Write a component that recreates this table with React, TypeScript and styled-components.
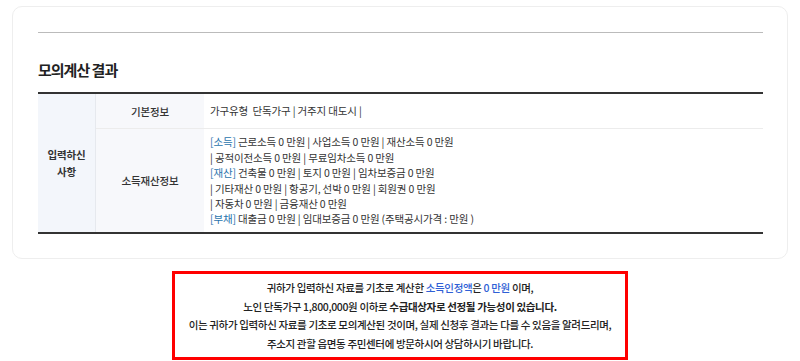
import styled, { createGlobalStyle } from "styled-components";

const GlobalStyle = createGlobalStyle`
  body {
    margin: 0;
    background: #ffffff;
    font-family: "Noto Sans CJK KR", "Noto Sans", sans-serif;
    color: #333;
  }
`;

const Page = styled.div`
  width: 800px;
  padding-top: 6px;
`;

const Card = styled.section`
  margin: 0 12px;
  height: 253px;
  box-sizing: border-box;
  border: 1px solid #eeeeee;
  border-radius: 10px;
  padding: 25px 24px 0 25px;
`;

const Divider = styled.hr`
  margin: 0;
  border: 0;
  border-top: 1px solid #bbbbbb;
`;

const Title = styled.h2`
  margin: 26px 0 0;
  height: 33px;
  font-size: 15px;
  font-weight: 700;
  letter-spacing: -1px;
  color: #222;
`;

const Table = styled.table`
  width: 100%;
  border-collapse: collapse;
  border-top: 2px solid #333;
  border-bottom: 2px solid #333;
  font-size: 10.5px;
  letter-spacing: -0.15px;
`;

const GroupHead = styled.th`
  width: 57px;
  padding: 0;
  background: #f3f6fb;
  border-right: 1px solid #e6e9ee;
  font-weight: 700;
  line-height: 17px;
  color: #333;
`;

const RowHead = styled.th<{ $h: number; $line?: boolean }>`
  width: 108px;
  height: ${(p) => p.$h}px;
  padding: 0;
  background: #f7f8fb;
  font-weight: 500;
  color: #333;
  border-bottom: ${(p) => (p.$line ? "1px solid #ececec" : "0")};
`;

const Cell = styled.td<{ $line?: boolean }>`
  padding: 0 6px;
  line-height: 15.4px;
  color: #333;
  border-bottom: ${(p) => (p.$line ? "1px solid #ececec" : "0")};
`;

const Tag = styled.span`
  color: #2a74ad;
`;

const Notice = styled.div`
  width: 456px;
  box-sizing: border-box;
  margin: 12px auto 0;
  border: 3px solid #ff0000;
  padding: 5px 0 4px;
  text-align: center;
  font-size: 10.5px;
  font-weight: 500;
  letter-spacing: -0.35px;
  line-height: 18.5px;
  color: #222;
`;

const Blue = styled.span`
  color: #2f5fd6;
`;

const Strong = styled.b`
  font-weight: 700;
`;

const incomeLines = [
  { tag: "[소득]", text: " 근로소득 0 만원 | 사업소득 0 만원 | 재산소득 0 만원" },
  { tag: "", text: "| 공적이전소득 0 만원 | 무료임차소득 0 만원" },
  { tag: "[재산]", text: " 건축물 0 만원 | 토지 0 만원 | 임차보증금 0 만원" },
  { tag: "", text: "| 기타재산 0 만원 | 항공기, 선박 0 만원 | 회원권 0 만원" },
  { tag: "", text: "| 자동차 0 만원 | 금융재산 0 만원" },
  { tag: "[부채]", text: " 대출금 0 만원 | 임대보증금 0 만원 (주택공시가격 : 만원 )" },
];

export default function App() {
  return (
    <Page>
      <GlobalStyle />
      <Card>
        <Divider />
        <Title>모의계산 결과</Title>
        <Table>
          <tbody>
            <tr>
              <GroupHead rowSpan={2}>
                입력하신
                <br />
                사항
              </GroupHead>
              <RowHead $h={34} $line>
                기본정보
              </RowHead>
              <Cell $line>가구유형 &nbsp;단독가구 | 거주지 대도시 |</Cell>
            </tr>
            <tr>
              <RowHead $h={103}>소득재산정보</RowHead>
              <Cell>
                {incomeLines.map((l, i) => (
                  <div key={i}>
                    {l.tag && <Tag>{l.tag}</Tag>}
                    {l.text}
                  </div>
                ))}
              </Cell>
            </tr>
          </tbody>
        </Table>
      </Card>
      <Notice>
        <div>
          귀하가 입력하신 자료를 기초로 계산한 <Blue>소득인정액</Blue>은{" "}
          <Blue>0 만원</Blue> 이며,
        </div>
        <div>
          노인 단독가구 1,800,000원 이하로{" "}
          <Strong>수급대상자로 선정될 가능성이 있습니다.</Strong>
        </div>
        <div>
          이는 귀하가 입력하신 자료를 기초로 모의계산된 것이며, 실제 신청후
          결과는 다를 수 있음을 알려드리며,
        </div>
        <div>주소지 관할 읍면동 주민센터에 방문하시어 상담하시기 바랍니다.</div>
      </Notice>
    </Page>
  );
}
